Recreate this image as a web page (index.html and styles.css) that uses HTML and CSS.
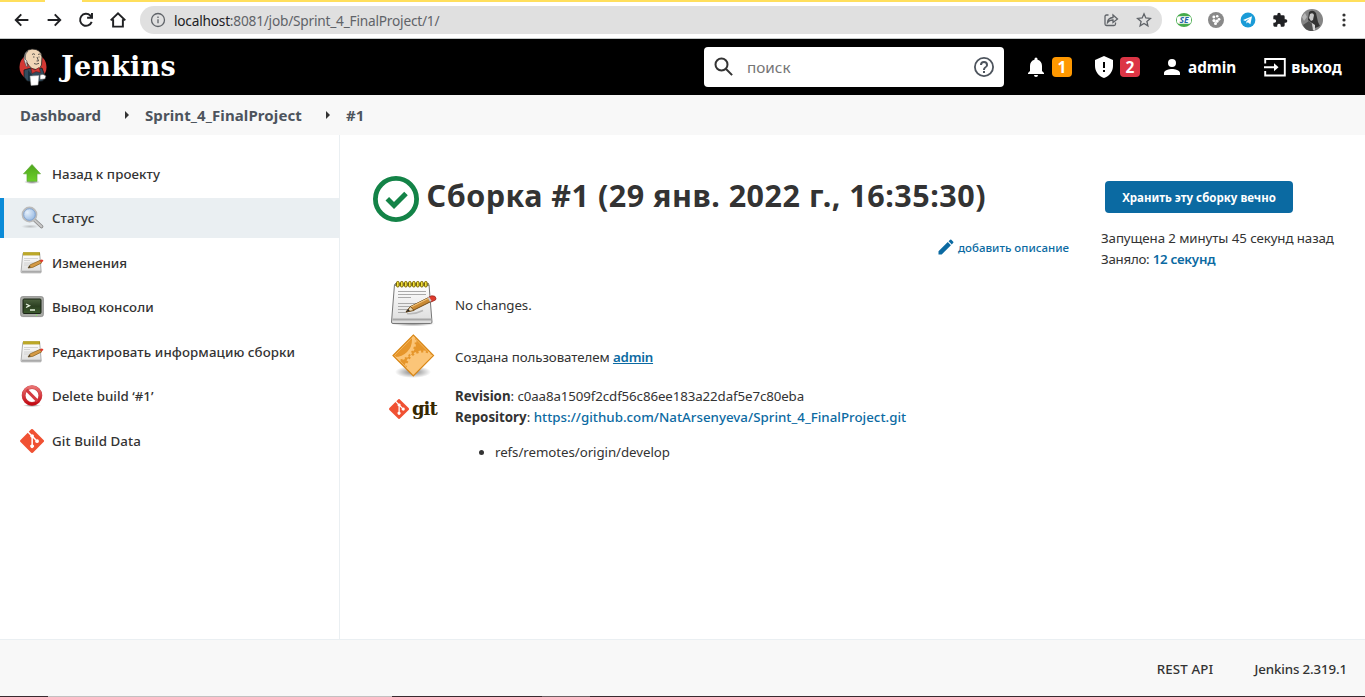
FILE: index.html
```html
<!DOCTYPE html>
<html lang="ru">
<head>
<meta charset="utf-8">
<title>Sprint_4_FinalProject #1 [Jenkins]</title>
<link rel="stylesheet" href="styles.css">
</head>
<body>
<svg class="defs" width="0" height="0" aria-hidden="true">
  <defs>
    <linearGradient id="gGreen" x1="0" y1="0" x2="0" y2="1"><stop offset="0" stop-color="#4ea51c"/><stop offset="1" stop-color="#6cd02a"/></linearGradient>
    <linearGradient id="gPaper" x1="0" y1="0" x2="0" y2="1"><stop offset="0" stop-color="#fff"/><stop offset="1" stop-color="#dcdcdc"/></linearGradient>
    <linearGradient id="gRed" x1="0" y1="0" x2="0" y2="1"><stop offset="0" stop-color="#e97070"/><stop offset="1" stop-color="#c40a14"/></linearGradient>
    <linearGradient id="gScreen" x1="0" y1="0" x2="0" y2="1"><stop offset="0" stop-color="#4d6340"/><stop offset=".5" stop-color="#2c4021"/><stop offset="1" stop-color="#3c5a2e"/></linearGradient>
    <radialGradient id="gLens" cx=".35" cy=".35" r=".8"><stop offset="0" stop-color="#e6f0fb"/><stop offset="1" stop-color="#86aede"/></radialGradient>
    <radialGradient id="gShade"><stop offset="0" stop-color="#000" stop-opacity=".5"/><stop offset="1" stop-color="#000" stop-opacity="0"/></radialGradient>
    <clipPath id="diamond"><path d="M24.300 5L43.500 24.500 24.300 43.800 5 24.500z"/></clipPath>
  </defs>
  <symbol id="notepad" viewBox="0 0 48 48">
    <ellipse cx="24" cy="44.500" rx="22" ry="3" fill="url(#gShade)"/>
    <path d="M5.500 5.500h34.500l3 37.500q0 1.500-1.500 1.500h-37.500q-1.500 0-1.500-1.500z" fill="url(#gPaper)" stroke="#777" stroke-width="1"/>
    <path d="M3.500 40.500h39.300" stroke="#a5a5a5" stroke-width="2"/>
    <path d="M6 5.500h34" stroke="#8a8a7a" stroke-width="3"/>
    <g fill="#f3e13c" stroke="#776300" stroke-width="1"><rect x="7.500" y="2.500" width="2.600" height="5.500" rx="1.200"/><rect x="11.500" y="2.500" width="2.600" height="5.500" rx="1.200"/><rect x="15.500" y="2.500" width="2.600" height="5.500" rx="1.200"/><rect x="19.500" y="2.500" width="2.600" height="5.500" rx="1.200"/><rect x="23.500" y="2.500" width="2.600" height="5.500" rx="1.200"/><rect x="27.500" y="2.500" width="2.600" height="5.500" rx="1.200"/><rect x="31.500" y="2.500" width="2.600" height="5.500" rx="1.200"/><rect x="35.500" y="2.500" width="2.600" height="5.500" rx="1.200"/></g>
    <path d="M9 12.500h28M9 15.500h28M9 18.500h13M9 24.500h28M9 27.500h22M9 30.500h12M9 33.500h8" stroke="#aaa" stroke-width="1"/>
    <path d="M18 34.500q8 1 16-3" stroke="#999" stroke-width="1.500" fill="none" opacity=".6"/>
    <path d="M17 33l4.500-5.500 19-9.500 2.500 4-18 9z" fill="#c98a35" stroke="#65400e" stroke-width=".9"/>
    <path d="M22 28l17-8.500" stroke="#f0c27a" stroke-width="1.300"/>
    <path d="M17 33l4.500-5.500 3.500 4z" fill="#ead6b0" stroke="#65400e" stroke-width=".8"/>
    <path d="M17 33l2.300-3 1.500 2z" fill="#222"/>
    <path d="M39.500 18.300l3-1.500q4-.5 4.500 2.400l-.5 1.800-4.300 2z" fill="#df3b2d" stroke="#8e2018" stroke-width=".7"/>
    <path d="M38.500 18.800l2.500 4 1.700-.8-2.500-4z" fill="#ccc"/>
  </symbol>
  <symbol id="notepad-s" viewBox="0 0 24 24">
    <path d="M2.800 2.500h16.900l1.500 18.500q0 .8-.8.800h-18.600q-.8 0-.8-.8z" fill="url(#gPaper)" stroke="#999" stroke-width=".8"/>
    <path d="M2 20.500h19" stroke="#aaa" stroke-width="1.600"/>
    <path d="M3 2.800h17" stroke="#a8941c" stroke-width="3.200"/>
    <path d="M3.500 2.800h16" stroke="#d0bc34" stroke-width="2.600" stroke-dasharray="1 1"/>
    <path d="M4 7.500h14M4 9.500h6M4 12h12M4 14h6" stroke="#ccc" stroke-width=".8"/>
    <path d="M8 17l2.200-3.200 10-4.500 1.500 2.600-9 4.500z" fill="#d59a45" stroke="#85601e" stroke-width=".7"/>
    <path d="M8 17l1.500-2.200 1.200 1.500z" fill="#333"/>
    <path d="M19.700 9.300l2-.9q1.800 0 1.700 1.500l-2 1.600z" fill="#df3b2d"/>
  </symbol>
  <symbol id="gitmark" viewBox="0 0 92 92">
    <path fill="#f05133" d="M90.200 41.900L50.200 1.900a5.900 5.900 0 0 0-8.300 0l-8.300 8.300 10.500 10.500a7 7 0 0 1 8.900 8.900l10.200 10.200a7 7 0 1 1-4.200 4l-9.500-9.500v25a7 7 0 1 1-5.800-.2V33.800a7 7 0 0 1-3.800-9.200L29.600 14.300 2.100 41.800a5.900 5.900 0 0 0 0 8.300l40 40a5.900 5.900 0 0 0 8.300 0l39.800-39.800a5.900 5.900 0 0 0 0-8.400z"/>
  </symbol>
</svg>

<div class="browser">
  <div class="tab-strip"></div>
  <div class="toolbar">
    <svg class="nav-icon" viewBox="0 0 24 24"><path d="M20.500 12H4M11 4.500L3.700 12l7.300 7.500"/></svg>
    <svg class="nav-icon" viewBox="0 0 24 24"><path d="M3.500 12H20M13 4.500l7.300 7.500-7.300 7.500"/></svg>
    <svg class="nav-icon" viewBox="0 0 24 24"><path d="M19.600 14.500A8 8 0 1 1 17.700 6l2 2.300M20 2.500V9h-6.500"/></svg>
    <svg class="nav-icon" viewBox="0 0 24 24"><path d="M2.300 12.500L12 3l9.700 9.500M5.500 11v9.800h13V11"/></svg>
    <div class="omnibox">
      <svg class="info" viewBox="0 0 16 16"><circle cx="8" cy="8" r="6.500"/><path d="M8 7.200v4M8 4.500v1.500"/></svg>
      <span class="url"><b>localhost</b>:8081/job/Sprint_4_FinalProject/1/</span>
      <svg class="share" viewBox="0 0 16 16"><path d="M5.500 3H3.500q-1.500 0-1.500 1.500v7.500q0 1.500 1.500 1.500h7.500q1.500 0 1.500-1.500v-1.500M4.500 10.500q.4-4.500 5.500-5V3l4.500 4L10 10.500V8q-3.500-.1-5.500 2.500z"/></svg>
      <svg class="star" viewBox="0 0 16 16"><path d="M8 1.800l1.800 4.200 4.600.4-3.500 3 1 4.500L8 11.500l-3.900 2.400 1-4.500-3.500-3 4.600-.4z"/></svg>
    </div>
    <div class="extensions">
      <svg viewBox="0 0 16 16"><ellipse cx="8" cy="8" rx="8" ry="7" fill="#46ab4b"/><rect x="1" y="4.200" width="14" height="7.600" rx="2" fill="#fff"/><text x="8" y="11" text-anchor="middle" class="ext-text">SE</text></svg>
      <svg viewBox="0 0 16 16"><circle cx="8" cy="8" r="8" fill="#898989"/><g fill="#fff"><circle cx="5.800" cy="5" r="1.400"/><circle cx="9.200" cy="4.200" r="1.300"/><circle cx="11" cy="7.300" r="1.400"/><circle cx="6" cy="8.600" r="1.600"/><circle cx="9" cy="9.200" r="1.600"/><circle cx="7.500" cy="11.500" r="1.500"/></g></svg>
      <svg viewBox="0 0 16 16"><circle cx="8" cy="8" r="7.400" fill="#1a9bd7"/><path fill="#fff" d="M3 8l9-3.700-1.600 7.900-2.600-1.900-1.300 1.300-.2-2.200 3.600-3.200-4.700 2.900z"/></svg>
      <svg viewBox="0 0 24 24"><path fill="#202124" d="M20.500 11H19V7a2 2 0 0 0-2-2h-4V3.500a2.500 2.500 0 0 0-5 0V5H4a2 2 0 0 0-2 2v3.800h1.500a2.700 2.700 0 0 1 0 5.400H2V20a2 2 0 0 0 2 2h3.800v-1.500a2.700 2.700 0 0 1 5.400 0V22H17a2 2 0 0 0 2-2v-4h1.500a2.500 2.500 0 0 0 0-5z"/></svg>
      <svg class="avatar" viewBox="0 0 22 22"><circle cx="11" cy="11" r="11" fill="#858585"/><path d="M8 3q4-3 7 1l2 9 2 4-5 2-3-5-4-3z" fill="#333"/><path d="M9 5q3-2 4 1l-1 5-2 1-2-3z" fill="#c8c8c8"/><path d="M2 16l6-4 3 3 2 7q-8 1-11-6z" fill="#505050"/><path d="M1 8l3-4 2 4-3 4z" fill="#b5b5b5"/><path d="M11 14l3 2v5l-2 .5z" fill="#d5d5d5"/></svg>
      <svg class="menu" viewBox="0 0 16 16"><g fill="#333"><circle cx="8" cy="3" r="1.600"/><circle cx="8" cy="8" r="1.600"/><circle cx="8" cy="13" r="1.600"/></g></svg>
    </div>
  </div>
</div>

<header class="header">
  <div class="brand">
    <svg class="butler" viewBox="0 0 28 40">
      <ellipse cx="14" cy="19" rx="13.500" ry="13.500" fill="#d33833"/>
      <path d="M5 22l7-2 4 1 7-1 3 8-2 5-7 1-9-1-3-4z" fill="#334c5d" stroke="#111" stroke-width=".7"/>
      <path d="M6 12Q4 2 13 1q9 0 10 8l-.5 8q-1 4-5.500 4.500-5 0-7-4z" fill="#f0d6b7" stroke="#222" stroke-width=".8"/>
      <path d="M6 11q0-6 3-8-4 1-4 9l2 6 2 1q-2-4-1-6z" fill="#ddd" stroke="#444" stroke-width=".6"/>
      <path d="M13 6.500q1.500-1.500 3 0M19 6.500q1.500-1 2.500.2M14 9h1.500M19.500 9h1M18 9l1.500 4h-2M15 15.500q2 1.500 5-.2" fill="none" stroke="#333" stroke-width=".8"/>
      <path d="M12 20l4 2 4-2.500 1.500 5-4.500-1-4 2z" fill="#d33833" stroke="#611" stroke-width=".5"/>
      <path d="M9 22l5 6 1 5H9z" fill="#1d3442"/>
      <path d="M11 28l9-.5-1 9.500-7 .5z" fill="#fff" stroke="#999" stroke-width=".5"/>
      <path d="M21 27q3-2 6 1l-1 3-5 .5z" fill="#fff" stroke="#444" stroke-width=".6"/>
    </svg>
    <span class="brand-name">Jenkins</span>
  </div>
  <div class="search">
    <svg class="search-icon" viewBox="0 0 24 24"><circle cx="9.500" cy="9.500" r="6"/><path d="M13.800 13.800l6.300 6.300"/></svg>
    <span class="placeholder">поиск</span>
    <svg class="help" viewBox="0 0 24 24"><path d="M11 18h2v-2h-2zm1-16a10 10 0 1 0 0 20 10 10 0 0 0 0-20zm0 18.200a8.200 8.200 0 1 1 0-16.400 8.200 8.200 0 0 1 0 16.400zM12 6a4 4 0 0 0-4 4h2a2 2 0 1 1 4 0c0 2-3 1.800-3 5h2c0-2.300 3-2.500 3-5a4 4 0 0 0-4-4z"/></svg>
  </div>
  <div class="alert">
    <svg viewBox="0 0 24 24"><path d="M12 22a2 2 0 0 0 2-2h-4a2 2 0 0 0 2 2zm6-6v-5c0-3.100-1.600-5.600-4.500-6.300V4a1.500 1.500 0 0 0-3 0v.7C7.600 5.400 6 7.900 6 11v5l-2 2v1h16v-1z"/></svg>
    <span class="badge orange">1</span>
  </div>
  <div class="alert">
    <svg viewBox="0 0 24 24"><path d="M12 1L3 5v6c0 5.500 3.800 10.700 9 12 5.200-1.300 9-6.500 9-12V5zm-1 6h2v6h-2zm0 8h2v2h-2z"/></svg>
    <span class="badge red">2</span>
  </div>
  <div class="user"><svg viewBox="0 0 24 24"><path d="M12 12a4 4 0 1 0 0-8 4 4 0 0 0 0 8zm0 2c-2.700 0-8 1.300-8 4v2h16v-2c0-2.700-5.300-4-8-4z"/></svg><span>admin</span></div>
  <div class="logout"><svg viewBox="0 0 24 24"><path d="M2.200 8.500V4h19.600v16.500H2.200V16M1 12.200h11" fill="none" stroke="#fff" stroke-width="1.900"/><path d="M11 8.200l4.500 4-4.500 4z"/></svg><span>выход</span></div>
</header>

<nav class="crumbs">
  <span class="c-one">Dashboard</span><i></i><span class="c-two">Sprint_4_FinalProject</span><i></i><span>#1</span>
</nav>

<div class="page">
  <aside class="side">
    <a class="task"><svg viewBox="0 0 24 24"><ellipse cx="12" cy="20" rx="8" ry="2" fill="url(#gShade)"/><path d="M12 2.500l8.500 9.300h-3.500v7.500H7v-7.500H3.500z" fill="url(#gGreen)" stroke="#5fa838" stroke-width=".7"/></svg><span>Назад к проекту</span></a>
    <a class="task active"><svg viewBox="0 0 24 24"><ellipse cx="10" cy="20.500" rx="9" ry="2" fill="url(#gShade)" opacity=".4"/><path d="M15 14.500l6.500 6" stroke="#888" stroke-width="3.600" stroke-linecap="round"/><path d="M15 14.500l6.500 6" stroke="#c8c8c8" stroke-width="2" stroke-linecap="round"/><circle cx="9.500" cy="8.500" r="7" fill="url(#gLens)" stroke="#bbb" stroke-width="1.800"/><circle cx="9.500" cy="8.500" r="5.800" fill="none" stroke="#7d9fcd" stroke-width=".9"/></svg><span>Статус</span></a>
    <a class="task"><svg viewBox="0 0 24 24"><use href="#notepad-s"/></svg><span class="t3">Изменения</span></a>
    <a class="task"><svg viewBox="0 0 24 24"><rect x=".6" y="1.600" width="22.800" height="20" rx="2" fill="#a9aba6" stroke="#888" stroke-width=".8"/><rect x="3" y="4" width="18" height="14.500" rx="1" fill="url(#gScreen)" stroke="#1b2517"/><path d="M6 9l3.500 1.700L6 12.500M10 15h5" fill="none" stroke="#e4f0dc" stroke-width="1.300"/><circle cx="16.500" cy="20.200" r=".7" fill="#84f05a"/></svg><span>Вывод консоли</span></a>
    <a class="task"><svg viewBox="0 0 24 24"><use href="#notepad-s"/></svg><span>Редактировать информацию сборки</span></a>
    <a class="task"><svg viewBox="0 0 24 24"><ellipse cx="12" cy="21.500" rx="9" ry="1.500" fill="url(#gShade)"/><circle cx="12" cy="11.500" r="8.400" fill="#fff" stroke="#c4474b" stroke-width="3.800"/><circle cx="12" cy="11.500" r="8.400" fill="none" stroke="url(#gRed)" stroke-width="3"/><path d="M6.400 5.900l11.200 11.200" stroke="#d33a40" stroke-width="2.900"/></svg><span class="t6">Delete build ‘#1’</span></a>
    <a class="task"><svg viewBox="0 0 24 24"><use href="#gitmark"/></svg><span>Git Build Data</span></a>
  </aside>

  <main class="main">
    <section class="build">
      <h1 class="title">
        <svg viewBox="0 0 48 48"><circle cx="24" cy="24" r="20.600" fill="none" stroke="#138347" stroke-width="4.800"/><path d="M15.300 23.700l6.700 6.700 12-12" fill="none" stroke="#138347" stroke-width="5"/></svg>
        <span>Сборка #1 (29 янв. 2022 г., 16:35:30)</span>
      </h1>
      <a class="describe"><svg viewBox="0 0 24 24"><path d="M3 17.200V21h3.800L17.900 9.900l-3.800-3.800zM20.700 7a1 1 0 0 0 0-1.400l-2.300-2.300a1 1 0 0 0-1.400 0l-1.900 1.900 3.800 3.800z"/></svg><span>добавить описание</span></a>
      <div class="row"><svg class="big" viewBox="0 0 48 48"><use href="#notepad"/></svg><span class="r1">No changes.</span></div>
      <div class="row">
        <svg class="big" viewBox="0 0 48 48">
          <ellipse cx="24" cy="41" rx="18" ry="6" fill="url(#gShade)"/>
          <path d="M24.300 4L44.500 24.500 24.300 44.800 4 24.500z" fill="#e6962b" stroke="#d98716" stroke-width="1.200"/>
          <g clip-path="url(#diamond)">
            <circle cx="6" cy="9" r="18.500" fill="none" stroke="#fbc578" stroke-width="3"/>
            <circle cx="6" cy="9" r="20.500" fill="none" stroke="#fbc578" stroke-width="2" stroke-dasharray="2.400 2"/>
            <circle cx="34" cy="38" r="16.500" fill="#fbc578"/>
            <circle cx="34" cy="38" r="17" fill="none" stroke="#fbc578" stroke-width="3" stroke-dasharray="2.500 2.200"/>
          </g>
          <path d="M24.300 5.500L43 24.500 24.300 43.300 5.500 24.500z" fill="none" stroke="#fbc578" stroke-width=".8" opacity=".8"/>
        </svg>
        <span class="r2">Создана пользователем <a>admin</a></span>
      </div>
      <div class="row git"><div class="gitlogo"><svg viewBox="0 0 24 24"><use href="#gitmark"/></svg><span>git</span></div>
        <div class="git-info">
          <div class="rev"><b>Revision</b>: c0aa8a1509f2cdf56c86ee183a22daf5e7c80eba</div>
          <div class="repo"><b>Repository</b>: <a>https://github.com/NatArsenyeva/Sprint_4_FinalProject.git</a></div>
          <ul><li>refs/remotes/origin/develop</li></ul>
        </div>
      </div>
    </section>
    <section class="meta">
      <button class="keep">Хранить эту сборку вечно</button>
      <div class="m1">Запущена 2 минуты 45 секунд назад</div>
      <div class="m2">Заняло: <a>12 секунд</a></div>
    </section>
  </main>
</div>

<footer class="footer"><span class="f1">REST API</span><span class="f2">Jenkins 2.319.1</span></footer>
<div class="edge"></div>
</body>
</html>
```

FILE: styles.css
```css
* { box-sizing: border-box; }
body { margin: 0; width: 1365px; height: 697px; overflow: hidden; display: flex; flex-direction: column; font-family: "Noto Sans", "Open Sans", sans-serif; font-size: 13.300px; line-height: 21px; color: #333; background: #fff; white-space: nowrap; }
svg { display: block; flex: none; }
.defs { position: absolute; }

.browser { height: 39px; flex: none; border-bottom: 1px solid #c4c8c8; background: #fff; }
.tab-strip { height: 2px; background: linear-gradient(90deg, #ffdf5c 45px, #fff 45px, #fff 82px, #ffdf5c 82px); }
.toolbar { display: flex; align-items: center; height: 36px; padding-left: 13px; }
.nav-icon { width: 18px; height: 18px; margin-right: 14px; fill: none; stroke: #202124; stroke-width: 2.600; }
.omnibox { display: flex; align-items: center; width: 1022px; height: 28px; margin-left: -1px; padding: 0 10px; border-radius: 14px; background: #e0e0e0; }
.omnibox svg { fill: none; stroke: #5f6368; stroke-width: 1.300; width: 16px; height: 16px; }
.url { margin-left: 8px; flex: 1; font-size: 13.700px; color: #5f6368; letter-spacing: -.22px; }
.url b { font-weight: 400; color: #202124; }
.omnibox .share { margin-right: 17px; }
.extensions { display: flex; align-items: center; gap: 16px; margin-left: 14px; }
.extensions svg { width: 16px; height: 16px; }
.ext-text { font: italic bold 8.500px "Open Sans", sans-serif; fill: #2766a8; }
.extensions .avatar { width: 22px; height: 22px; margin: 0 -3px; }

.header { height: 56px; flex: none; display: flex; align-items: center; background: #000; color: #fff; }
.brand { display: flex; align-items: center; width: 704px; padding-left: 19px; }
.butler { width: 28px; height: 40px; margin-top: 1px; }
.brand-name { margin: -1px 0 0 14px; font: bold 27px/40px "DejaVu Serif", serif; letter-spacing: .2px; }
.search { display: flex; align-items: center; width: 300px; height: 40px; padding: 0 8px; border-radius: 4px; background: #fff; }
.search-icon { width: 24px; height: 24px; fill: none; stroke: #333; stroke-width: 2; }
.placeholder { flex: 1; margin: 1px 0 0 11px; font-size: 15.300px; color: #757575; }
.help { width: 24px; height: 24px; fill: #4d545d; }
.alert { display: flex; align-items: center; margin-left: 20px; }
.alert svg, .user svg, .logout svg { width: 24px; height: 24px; fill: #fff; }
.badge { width: 20px; height: 20px; margin-left: 4px; border-radius: 4px; font-weight: 700; font-size: 15.500px; line-height: 21px; text-align: center; }
.orange { background: #ff9800; }
.red { background: #dc3545; }
.user, .logout { display: flex; align-items: center; font-weight: 700; font-size: 15.300px; }
.user { margin-left: 20px; }
.user span { margin: 1px 0 0 4px; }
.logout { margin-left: 27px; }
.logout span { margin: 1px 0 0 4px; letter-spacing: .15px; }

.crumbs { display: flex; align-items: center; height: 40px; flex: none; padding-left: 20px; background: #f8f8f8; font-weight: 700; font-size: 15px; color: #4d545d; }
.crumbs i { margin: 0 16px 0 24px; border-left: 4px solid #333; border-top: 4px solid transparent; border-bottom: 4px solid transparent; }
.c-one { width: 81px; }
.c-two { width: 157px; letter-spacing: .1px; }

.page { flex: 1; display: flex; }
.side { display: flex; flex-direction: column; gap: 4.500px; width: 340px; padding-top: 18.900px; border-right: 1px solid #eaeff2; }
.task { display: flex; align-items: center; height: 40px; padding-left: 20px; font-weight: 500; letter-spacing: .08px; }
.task svg { width: 24px; height: 24px; margin-right: 8px; }
.task span { padding-top: .4px; }
.task .t3, .task .t6 { letter-spacing: 0; }
.task.active { border-left: 4px solid #0b8bd8; padding-left: 16px; background: #eaeff2; }

.main { flex: 1; display: flex; }
.build { width: 730px; padding: 38px 0 0 32px; }
.title { display: flex; align-items: center; height: 50px; margin: 0; font-size: 30.500px; line-height: 40px; font-weight: 700; letter-spacing: .5px; }
.title svg { width: 48px; height: 48px; margin: 1px 6.500px 0 0; }
.title span { margin-top: -7px; }
.describe { display: flex; align-items: center; justify-content: flex-end; height: 24px; margin-top: 12px; padding-right: 1px; font-size: 11.500px; font-weight: 500; color: #0b6aa2; }
.describe svg { width: 20px; height: 20px; margin-right: 2px; fill: #0b6aa2; }
.row { display: flex; align-items: center; height: 52px; padding-left: 17px; }
.describe + .row { margin-top: 18px; }
.big { width: 48px; height: 48px; margin-right: 18px; }
.row a, .m2 a { color: #0b6aa2; font-weight: 600; }
.r1, .r2 { margin-top: 4px; letter-spacing: -.08px; }
.r2 a { text-decoration: underline; letter-spacing: -.2px; }
.rev { letter-spacing: -.1px; }
.rev b { letter-spacing: 0; }
.row.git { align-items: flex-start; height: auto; padding-top: 5px; }
.gitlogo { display: flex; align-items: center; width: 66px; height: 48px; margin-top: -1px; }
.gitlogo svg { width: 20px; height: 20px; margin-right: 3px; }
.gitlogo span { margin-top: -1px; font: bold 18px/24px "DejaVu Serif", serif; letter-spacing: -1px; color: #362701; }
.git-info ul { margin: 14px 0 0; padding-left: 40px; letter-spacing: -.06px; }
.repo a { font-weight: 500; letter-spacing: .02px; }
.meta { padding: 46px 0 0 31px; }
.keep { display: block; width: 188px; height: 32px; margin: 0 0 15px 4px; padding: 1px 0 0; border: 0; border-radius: 4px; background: #0b6aa2; color: #fff; font: 700 11.500px/31px "Noto Sans", sans-serif; }
.m1 { letter-spacing: -.09px; }
.m2 { letter-spacing: -.25px; }

.footer { display: flex; align-items: center; justify-content: flex-end; gap: 41px; height: 57px; flex: none; padding: 3px 18px 0 0; border-top: 1px solid #eaeff2; background: #f8f8f8; font-weight: 500; }
.f1 { letter-spacing: .15px; }
.f2 { letter-spacing: -.12px; }
.edge { height: 1px; flex: none; background: linear-gradient(90deg, #3a2a30 48px, #c4c0c1 48px, #c4c0c1 392px, #3a2a30 392px, #3a2a30 542px, #6d5f63 542px, #6d5f63 590px, #3a2a30 590px); }
```
